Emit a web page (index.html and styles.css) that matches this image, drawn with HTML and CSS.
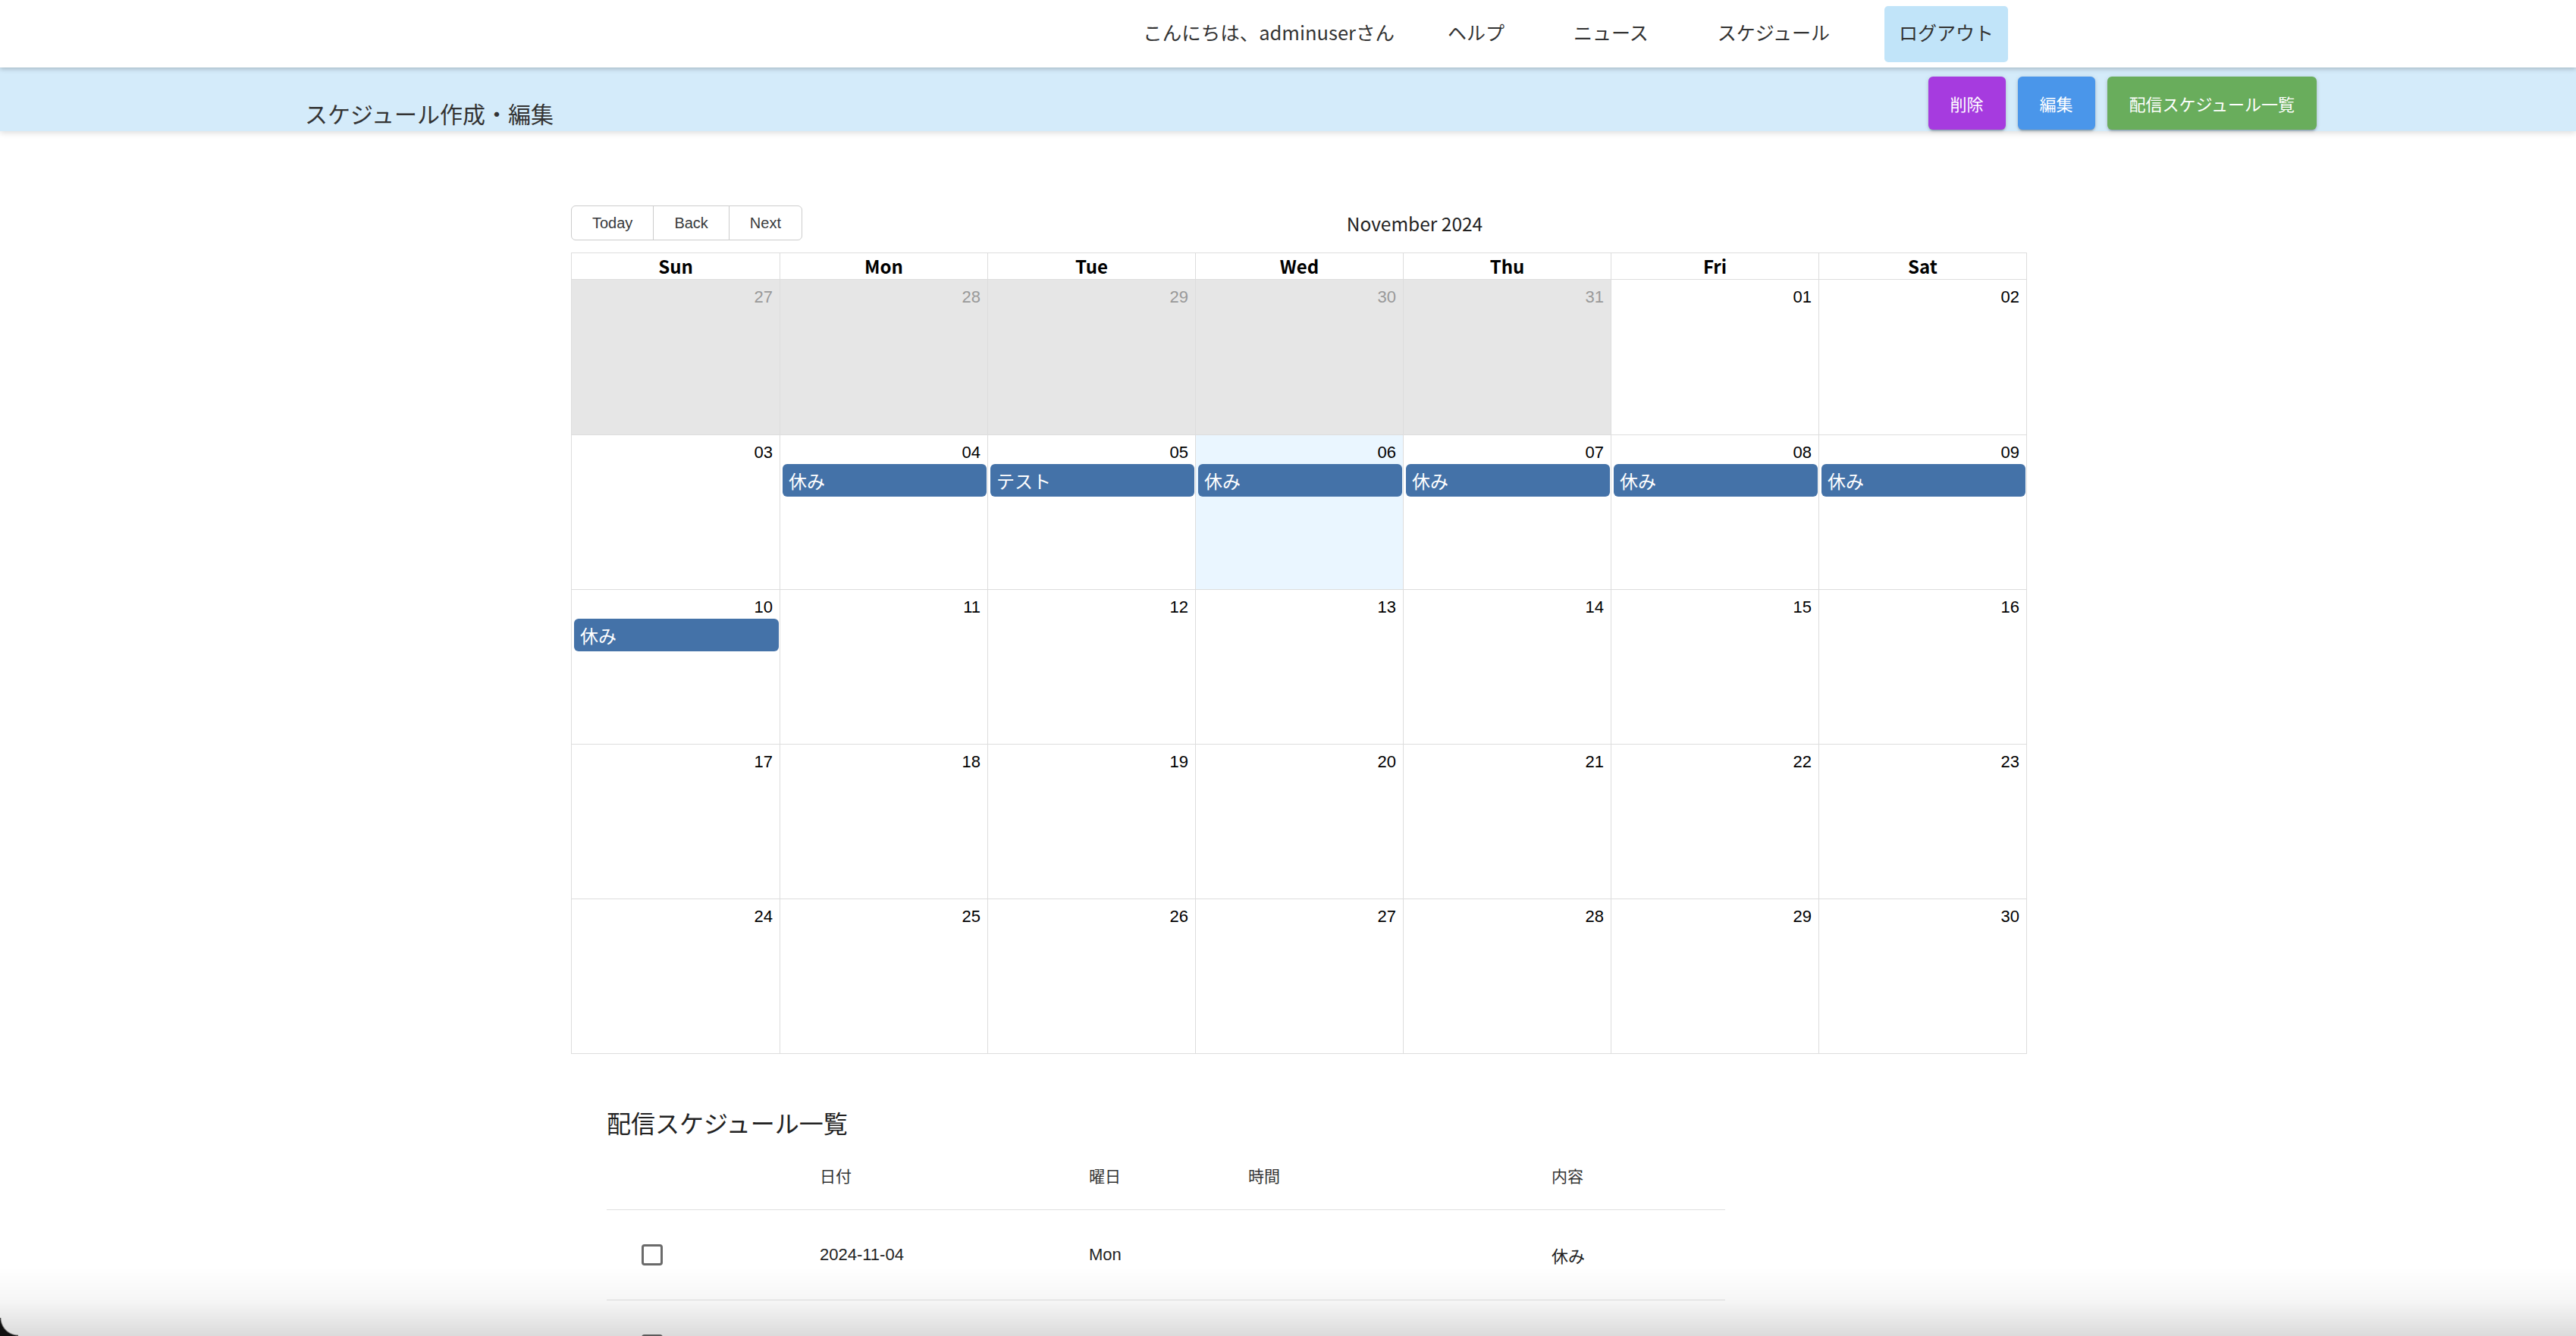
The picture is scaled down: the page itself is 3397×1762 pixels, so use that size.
FILE: index.html
```html
<!DOCTYPE html>
<html lang="ja">
<head>
<meta charset="utf-8">
<title>スケジュール作成・編集</title>
<link rel="stylesheet" href="styles.css">
</head>
<body>
<header class="topbar">
  <span class="greeting">こんにちは、adminuserさん</span>
  <a class="nav-link">ヘルプ</a>
  <a class="nav-link">ニュース</a>
  <a class="nav-link">スケジュール</a>
  <a class="nav-link logout">ログアウト</a>
</header>
<div class="subbar">
  <h1 class="page-title">スケジュール作成・編集</h1>
  <div class="actions">
    <button class="btn btn-delete">削除</button>
    <button class="btn btn-edit">編集</button>
    <button class="btn btn-list">配信スケジュール一覧</button>
  </div>
</div>
<main class="main">
  <div class="toolbar">
    <div class="btn-group">
      <button class="tb-btn">Today</button>
      <button class="tb-btn">Back</button>
      <button class="tb-btn">Next</button>
    </div>
    <div class="tb-label">November 2024</div>
  </div>
  <div class="cal">
    <div class="cal-head">
      <div class="hcell">Sun</div><div class="hcell">Mon</div><div class="hcell">Tue</div><div class="hcell">Wed</div><div class="hcell">Thu</div><div class="hcell">Fri</div><div class="hcell">Sat</div>
    </div>
    <div class="week">
      <div class="day off"><div class="num">27</div></div>
      <div class="day off"><div class="num">28</div></div>
      <div class="day off"><div class="num">29</div></div>
      <div class="day off"><div class="num">30</div></div>
      <div class="day off"><div class="num">31</div></div>
      <div class="day"><div class="num">01</div></div>
      <div class="day"><div class="num">02</div></div>
    </div>
    <div class="week">
      <div class="day"><div class="num">03</div></div>
      <div class="day"><div class="num">04</div><div class="event">休み</div></div>
      <div class="day"><div class="num">05</div><div class="event">テスト</div></div>
      <div class="day today"><div class="num">06</div><div class="event">休み</div></div>
      <div class="day"><div class="num">07</div><div class="event">休み</div></div>
      <div class="day"><div class="num">08</div><div class="event">休み</div></div>
      <div class="day"><div class="num">09</div><div class="event">休み</div></div>
    </div>
    <div class="week">
      <div class="day"><div class="num">10</div><div class="event">休み</div></div>
      <div class="day"><div class="num">11</div></div>
      <div class="day"><div class="num">12</div></div>
      <div class="day"><div class="num">13</div></div>
      <div class="day"><div class="num">14</div></div>
      <div class="day"><div class="num">15</div></div>
      <div class="day"><div class="num">16</div></div>
    </div>
    <div class="week">
      <div class="day"><div class="num">17</div></div>
      <div class="day"><div class="num">18</div></div>
      <div class="day"><div class="num">19</div></div>
      <div class="day"><div class="num">20</div></div>
      <div class="day"><div class="num">21</div></div>
      <div class="day"><div class="num">22</div></div>
      <div class="day"><div class="num">23</div></div>
    </div>
    <div class="week">
      <div class="day"><div class="num">24</div></div>
      <div class="day"><div class="num">25</div></div>
      <div class="day"><div class="num">26</div></div>
      <div class="day"><div class="num">27</div></div>
      <div class="day"><div class="num">28</div></div>
      <div class="day"><div class="num">29</div></div>
      <div class="day"><div class="num">30</div></div>
    </div>
  </div>

  <section class="list">
    <h2 class="list-title">配信スケジュール一覧</h2>
    <div class="table">
      <div class="trow thead">
        <div class="tcell"></div>
        <div class="tcell">日付</div>
        <div class="tcell">曜日</div>
        <div class="tcell">時間</div>
        <div class="tcell">内容</div>
      </div>
      <div class="trow tbody">
        <div class="tcell cb-cell"><span class="checkbox"></span></div>
        <div class="tcell">2024-11-04</div>
        <div class="tcell">Mon</div>
        <div class="tcell"></div>
        <div class="tcell">休み</div>
      </div>
      <div class="trow tbody">
        <div class="tcell cb-cell"><span class="checkbox"></span></div>
        <div class="tcell"></div>
        <div class="tcell"></div>
        <div class="tcell"></div>
        <div class="tcell"></div>
      </div>
    </div>
  </section>
</main>
<div class="shade"></div>
<div class="corner"></div>
</body>
</html>
```

FILE: styles.css
```css
* { box-sizing: border-box; }
html, body { margin: 0; padding: 0; background: #fff; }
body {
  font-family: "Noto Sans CJK JP", "Noto Sans", sans-serif;
  color: #333;
  overflow: hidden;
}

/* top navigation */
.topbar {
  position: relative;
  z-index: 3;
  height: 89px;
  background: #fff;
  display: flex;
  justify-content: flex-end;
  align-items: center;
  gap: 53px;
  padding-right: 749px;
  box-shadow: 0 2px 6px rgba(0, 0, 0, 0.22);
  font-size: 25px;
}
.greeting { color: #333; margin-right: -2px; padding-bottom: 6px; font-size: 25.5px; }
.nav-link {
  color: #333;
  padding: 0 19px 6px;
  height: 74px;
  line-height: 68px;
  border-radius: 5px;
}
.logout { background: #c1e4f9; }

/* sub bar */
.subbar {
  position: relative;
  z-index: 2;
  height: 84px;
  background: #d4ebfa;
  display: flex;
  justify-content: space-between;
  padding: 0 342px 0 402px;
  box-shadow: 0 3px 7px rgba(0, 0, 0, 0.12);
}
.page-title {
  margin: 0 0 6px 0;
  align-self: flex-end;
  font-size: 30px;
  font-weight: 400;
  line-height: 36px;
  color: #333;
}
.actions {
  display: flex;
  gap: 16px;
  padding-top: 12px;
}
.btn {
  height: 70px;
  min-width: 102px;
  padding: 0 27px;
  border: none;
  border-radius: 6px;
  color: #fff;
  font-family: "Roboto", "Noto Sans CJK JP", sans-serif;
  font-size: 22px;
  box-shadow: 0 3px 2px -2px rgba(0,0,0,0.2), 0 2px 3px rgba(0,0,0,0.14), 0 1px 6px rgba(0,0,0,0.12);
}
.btn-delete { background: #a63bdf; }
.btn-edit { background: #4a96ea; }
.btn-list { background: #69ad5c; padding: 0 29px; }

/* calendar */
.main {
  width: 1920px;
  margin-left: 753px;
  padding-top: 98px;
}
.toolbar {
  display: flex;
  align-items: center;
  height: 46px;
  margin-bottom: 16px;
}
.btn-group { display: flex; }
.tb-btn {
  height: 46px;
  padding: 0 27px;
  background: #fff;
  border: 1px solid #ccc;
  margin-left: -1px;
  font-family: "Liberation Sans", Arial, sans-serif;
  font-size: 20px;
  color: #373a3c;
}
.tb-btn:first-child { margin-left: 0; border-radius: 6px 0 0 6px; }
.tb-btn:last-child { border-radius: 0 6px 6px 0; }
.tb-label {
  flex: 1;
  text-align: center;
  font-size: 24.5px;
  color: #222;
}

.cal {
  border: 1px solid #ddd;
  width: 1920px;
}
.cal-head {
  display: grid;
  grid-template-columns: repeat(7, 1fr);
  height: 35px;
  border-bottom: 1px solid #ddd;
}
.hcell {
  text-align: center;
  font-weight: 700;
  font-size: 24px;
  line-height: 34px;
  color: #000;
  border-left: 1px solid #ddd;
}
.hcell:first-child { border-left: none; }
.week {
  display: grid;
  grid-template-columns: repeat(7, 1fr);
  height: 204px;
  border-top: 1px solid #ddd;
}
.cal-head + .week { border-top: none; }
.day {
  border-left: 1px solid #ddd;
  padding-top: 8px;
}
.day:first-child { border-left: none; }
.day.off { background: #e6e6e6; }
.day.off .num { color: #999; }
.day.today { background: #eaf6ff; }
.num {
  text-align: right;
  padding-right: 9px;
  height: 30px;
  line-height: 30px;
  font-family: "Liberation Sans", Arial, sans-serif;
  font-size: 22px;
  color: #000;
}
.event {
  margin: 0 1px 0 3px;
  height: 43px;
  line-height: 43px;
  padding-left: 8px;
  background: #4472a8;
  color: #fff;
  border-radius: 6px;
  font-size: 24px;
}

/* list */
.list {
  padding: 71px 0 0 47px;
}
.list-title {
  margin: 0 0 5px 0;
  font-size: 32px;
  line-height: 38px;
  font-weight: 400;
  color: #222;
}
.table { width: 1475px; }
.trow {
  display: grid;
  grid-template-columns: 265px 355px 210px 400px 245px;
  align-items: center;
  border-bottom: 1px solid #e0e0e0;
}
.thead { height: 92px; font-size: 21px; color: #333; }
.tbody { height: 119px; font-size: 22px; color: #222; font-family: "Liberation Sans", "Noto Sans CJK JP", sans-serif; }
.tcell { padding-left: 16px; }
.cb-cell { padding-left: 46px; display: flex; align-items: center; }
.checkbox {
  display: inline-block;
  width: 28px;
  height: 28px;
  border: 3px solid #6a6a6a;
  border-radius: 4px;
  background: #fff;
}

/* window shade at bottom (screenshot artefact) */
.shade {
  position: fixed;
  left: 0;
  right: 0;
  bottom: 0;
  height: 90px;
  background: linear-gradient(to bottom, rgba(0,0,0,0) 0%, rgba(0,0,0,0.04) 50%, rgba(0,0,0,0.14) 100%);
  pointer-events: none;
  z-index: 10;
}
.corner {
  position: fixed;
  left: 0;
  bottom: 0;
  width: 24px;
  height: 24px;
  background: radial-gradient(circle at 100% 0%, rgba(0,0,0,0) 22px, #111 24px);
  pointer-events: none;
  z-index: 11;
}
```
